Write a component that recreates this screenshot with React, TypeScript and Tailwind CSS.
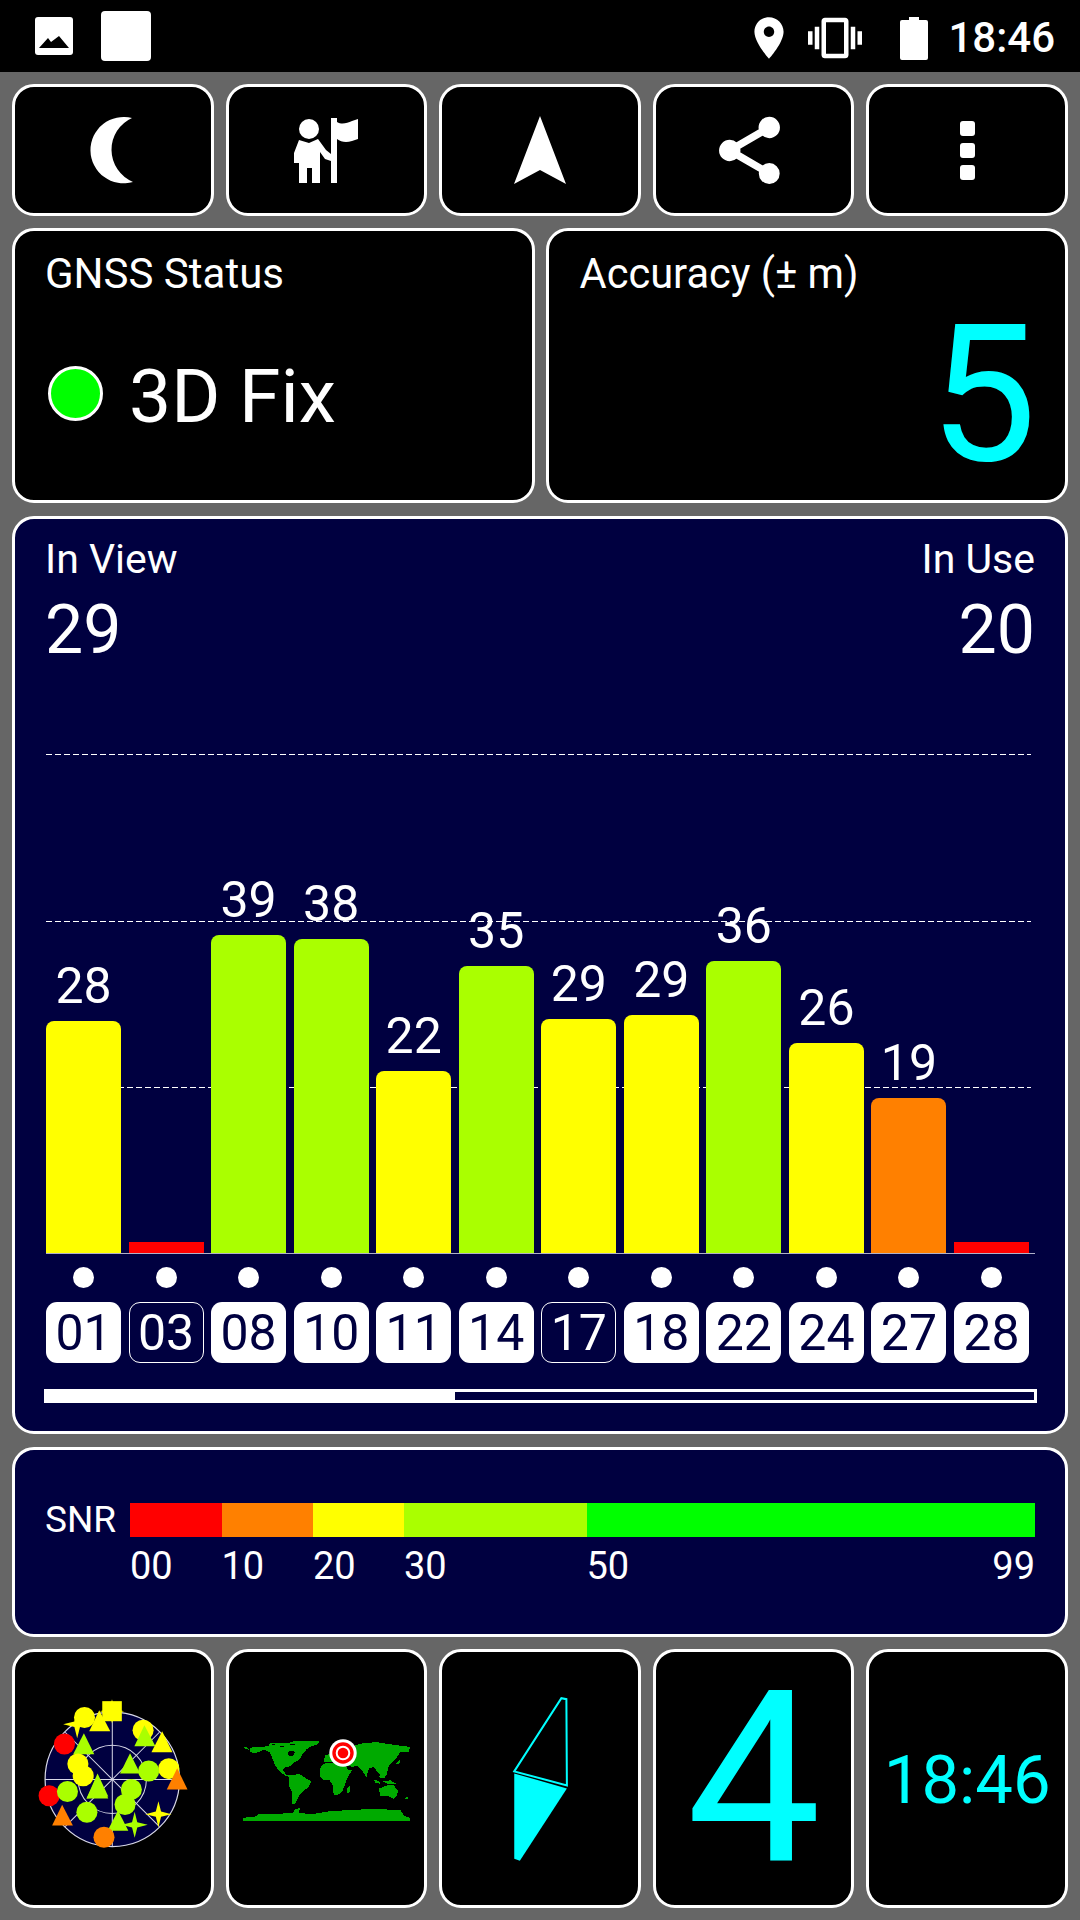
import React from "react";

const Y = "#ffff00", G = "#aaff00", O = "#ff8000", R = "#ff0000";

const sats = [
  { n: "01", v: 28, top: 1021, c: Y, used: true },
  { n: "03", v: null, top: 1242, c: R, used: false },
  { n: "08", v: 39, top: 935, c: G, used: true },
  { n: "10", v: 38, top: 939, c: G, used: true },
  { n: "11", v: 22, top: 1071, c: Y, used: true },
  { n: "14", v: 35, top: 966, c: G, used: true },
  { n: "17", v: 29, top: 1019, c: Y, used: false },
  { n: "18", v: 29, top: 1015, c: Y, used: true },
  { n: "22", v: 36, top: 961, c: G, used: true },
  { n: "24", v: 26, top: 1043, c: Y, used: true },
  { n: "27", v: 19, top: 1098, c: O, used: true },
  { n: "28", v: null, top: 1242, c: R, used: true },
];

const Moon = () => (
  <svg width="50" height="70" viewBox="86 115 50 70">
    <path fill="#fff" d="M132 118A33.2 33.2 0 1 0 133 182A34.9 34.9 0 0 1 132 118Z" />
  </svg>
);

const Tour = () => (
  <svg width="72" height="74" viewBox="290 112 72 74">
    <circle cx="309" cy="128" r="10" fill="#fff" />
    <path fill="#fff" d="M299 139L309 142L318 138L326 149L331 153V160L325 158L320 151V182H312V167H307V182H299V162H294V152Z" />
    <path fill="#fff" d="M331 117H337V121C342 124 347 122 352 120L358 118V138L352 140C346 142 341 141 337 138V182H331Z" />
  </svg>
);

const Tile = ({ children, className = "" }: { children?: React.ReactNode; className?: string }) => (
  <div className={`rounded-[22px] border-[3px] border-white bg-black flex items-center justify-center ${className}`}>
    {children}
  </div>
);

const Star = ({ x, y, a, c }: { x: number; y: number; a: number; c: string }) => {
  const i = a * 0.2;
  return (
    <polygon
      fill={c}
      points={`${x},${y - a} ${x + i},${y - i} ${x + a},${y} ${x + i},${y + i} ${x},${y + a} ${x - i},${y + i} ${x - a},${y} ${x - i},${y - i}`}
    />
  );
};

const Tri = ({ p, c }: { p: string; c: string }) => <polygon points={p} fill={c} />;
const Dot = ({ x, y, c }: { x: number; y: number; c: string }) => <circle cx={x} cy={y} r="10.5" fill={c} />;

const SkyPlot = () => (
  <svg className="w-full h-full" viewBox="16 1652 195 252">
    <circle cx="113" cy="1779" r="67" fill="#000040" stroke="#d8d8e8" strokeWidth="1.2" />
    <circle cx="113" cy="1779" r="34" fill="none" stroke="#d8d8e8" strokeWidth="1" />
    <g stroke="#d8d8e8" strokeWidth="1">
      <line x1="46" y1="1779" x2="180" y2="1779" />
      <line x1="113" y1="1712" x2="113" y2="1846" />
      <line x1="66" y1="1732" x2="160" y2="1826" />
      <line x1="66" y1="1826" x2="160" y2="1732" />
    </g>
    <Star x={78} y={1724} a={14} c={Y} />
    <Dot x={85.3} y={1717.3} c={Y} />
    <Tri p="100,1710 90,1731 111,1731" c={Y} />
    <Star x={112.7} y={1711} a={12} c={Y} />
    <rect x="103" y="1701" width="19.5" height="20" fill={Y} />
    <Dot x={143.7} y={1730} c={Y} />
    <Tri p="145,1725 135,1746 156,1746" c={G} />
    <Tri p="162.7,1731 152,1752 173,1752" c={Y} />
    <Dot x={65.3} y={1743.7} c={R} />
    <Tri p="84.7,1733 74,1754 95,1754" c={G} />
    <Dot x={78.7} y={1763.7} c={Y} />
    <Dot x={84} y={1775.3} c={Y} />
    <Tri p="130.7,1753 120.7,1773 140.7,1773" c={G} />
    <Dot x={169.3} y={1768.3} c={Y} />
    <Dot x={149.3} y={1770.7} c={G} />
    <Tri p="177.7,1768 167.3,1789 188,1789" c={O} />
    <Dot x={50} y={1795.3} c={R} />
    <Dot x={68.3} y={1791} c={G} />
    <Tri p="98.3,1773 87.3,1798 109,1796" c={G} />
    <Tri p="98.3,1775 87.3,1798 109,1798" c={G} />
    <Dot x={132} y={1789} c={G} />
    <Dot x={125.7} y={1804} c={G} />
    <Dot x={87.7} y={1811.7} c={G} />
    <Tri p="63,1804.3 53,1825 73.7,1825" c={O} />
    <Star x={159} y={1813.7} a={13} c={Y} />
    <Star x={135.3} y={1824.3} a={13} c={G} />
    <Tri p="118.7,1810 108.3,1830.3 129,1830.3" c={G} />
    <Dot x={104.7} y={1836.7} c={O} />
  </svg>
);

const land = [
  "40,80 52,82 56,88 46,86",
  "60,82 115,78 120,68 175,68 195,62 268,62 262,72 240,80 228,88 218,100 212,112 205,120 190,128 178,138 165,140 158,150 170,165 190,165 205,172 182,172 165,165 150,155 135,135 125,110 118,95 100,88 75,100 60,95",
  "178,170 205,160 225,172 243,183 235,200 222,210 208,222 195,250 186,250 185,215 175,195",
  "268,145 280,130 330,125 345,135 355,150 365,150 352,170 345,190 335,215 318,225 310,222 308,195 298,180 280,178 270,168",
  "280,125 285,105 300,100 340,85 400,68 440,66 480,72 538,80 535,95 510,95 500,110 480,130 472,145 470,160 460,175 445,160 430,140 415,145 408,170 395,150 380,135 365,140 330,125",
  "40,292 75,288 85,282 150,280 200,275 240,282 300,272 370,268 440,265 510,270 520,285 538,292 538,300 40,300",
  "445,205 470,195 490,195 502,210 500,225 490,235 470,225 450,228",
  "350,205 360,195 358,215 350,220",
  "430,178 445,182 450,190 436,188",
  "455,182 480,180 497,190 470,190",
  "445,170 458,175 462,165 452,160",
  "495,130 510,118 506,132",
  "518,238 532,228 532,234",
  "190,268 210,262 205,275 192,276",
];

const WorldMap = () => (
  <svg className="w-full h-full" viewBox="229 1652 195 252">
    <svg x="230" y="1720" width="200" height="120" viewBox="0 0 600 360" shapeRendering="crispEdges">
      {land.map((p, i) => (
        <polygon key={i} points={p} fill="#00aa00" />
      ))}
      <polygon points="172,96 186,90 194,96 188,106 176,106" fill="#000" />
      <rect x="125" y="72" width="9" height="3" fill="#000" />
      <rect x="150" y="76" width="12" height="3" fill="#000" />
      <rect x="180" y="72" width="15" height="3" fill="#000" />
    </svg>
  </svg>
);

const Marker = () => (
  <svg className="absolute left-[99px] top-[86px]" width="30" height="30" viewBox="-15 -15 30 30">
    <circle r="13.7" fill="#fff" />
    <circle r="10.7" fill={R} />
    <circle r="6.3" fill={R} stroke="#fff" strokeWidth="2" />
  </svg>
);

const Compass = () => (
  <svg className="w-full h-full" viewBox="442 1652 195 252">
    <polygon points="514,1771 561,1698 566,1699 566.5,1785" fill="none" stroke="#00ffff" strokeWidth="2" />
    <polygon points="514,1773 566.5,1788 519.6,1860 514,1858" fill="#00ffff" />
  </svg>
);

export default function App() {
  return (
    <div className="w-[1080px] h-[1920px] bg-[#666666] font-[family-name:Roboto,sans-serif] text-white overflow-hidden">
      {/* status bar */}
      <div className="h-[72px] bg-black flex items-center relative">
        <svg className="ml-[35px]" width="38" height="38" viewBox="0 0 38 38">
          <rect width="38" height="38" rx="3" fill="#fff" />
          <polygon fill="#000" points="4,31 13,21 16,25 24,19 34,31" />
        </svg>
        <div className="ml-[28px] w-[50px] h-[50px] rounded-[4px] bg-white" />
        <div className="ml-auto mt-[4px] flex items-center">
          <svg width="50" height="50" viewBox="0 0 24 24" fill="#fff">
            <path d="M12 2C8.13 2 5 5.13 5 9c0 5.25 7 13 7 13s7-7.75 7-13c0-3.87-3.13-7-7-7zm0 9.5c-1.38 0-2.5-1.12-2.5-2.5s1.12-2.5 2.5-2.5 2.5 1.12 2.5 2.5-1.12 2.5-2.5 2.5z" />
          </svg>
          <svg className="ml-[14px]" width="54" height="54" viewBox="0 0 24 24" fill="#fff">
            <path d="M0 15h2V9H0v6zm3 2h2V7H3v10zm19-8v6h2V9h-2zm-3 8h2V7h-2v10zM16.5 3h-9C6.67 3 6 3.67 6 4.5v15c0 .83.67 1.5 1.5 1.5h9c.83 0 1.5-.67 1.5-1.5v-15c0-.83-.67-1.5-1.5-1.5zM16 19H8V5h8v14z" />
          </svg>
          <svg className="ml-[38px]" width="28" height="43" viewBox="0 0 28 43" fill="#fff">
            <path d="M9 0H19V3H26Q28 3 28 5V41Q28 43 26 43H2Q0 43 0 41V5Q0 3 2 3H9Z" />
          </svg>
          <span className="ml-[20px] mr-[25px] text-[42px] leading-none font-medium">18:46</span>
        </div>
      </div>

      <div className="pl-[12px] pr-[12px] pt-[12px] flex flex-col">
        {/* buttons */}
        <div className="grid grid-cols-5 gap-[12px] h-[132px]">
          <Tile className="pr-[3px]"><Moon /></Tile>
          <Tile><Tour /></Tile>
          <Tile>
            <svg width="52" height="68" viewBox="0 0 52 68"><polygon fill="#fff" points="26,0 52,68 26,54 0,68" /></svg>
          </Tile>
          <Tile className="pr-[8px]">
            <svg width="79" height="79" viewBox="0 0 24 24" fill="#fff" stroke="#fff" strokeWidth="0.5">
              <path d="M18 16.08c-.76 0-1.44.3-1.96.77L8.91 12.7c.05-.23.09-.46.09-.7s-.04-.47-.09-.7l7.05-4.11c.54.5 1.25.81 2.04.81 1.66 0 3-1.34 3-3s-1.34-3-3-3-3 1.34-3 3c0 .24.04.47.09.7L8.04 9.81C7.5 9.31 6.79 9 6 9c-1.66 0-3 1.34-3 3s1.34 3 3 3c.79 0 1.5-.31 2.04-.81l7.12 4.16c-.05.21-.08.43-.08.65 0 1.61 1.31 2.92 2.92 2.92 1.61 0 2.92-1.31 2.92-2.92s-1.31-2.92-2.92-2.92z" />
            </svg>
          </Tile>
          <Tile className="flex-col gap-[7px]">
            <div className="w-[15px] h-[15px] rounded-[3px] bg-white" />
            <div className="w-[15px] h-[15px] rounded-[3px] bg-white" />
            <div className="w-[15px] h-[15px] rounded-[3px] bg-white" />
          </Tile>
        </div>

        {/* status cards */}
        <div className="grid grid-cols-2 gap-[11px] h-[275px] mt-[12px]">
          <div className="rounded-[22px] border-[3px] border-white bg-black pl-[30px] pt-[22px]">
            <div className="text-[42px] leading-none">GNSS Status</div>
            <div className="flex items-center mt-[64px]">
              <div className="ml-[3px] mb-[6px] w-[55px] h-[55px] rounded-full bg-[#00ff00] border-[3px] border-white" />
              <span className="ml-[26px] text-[75px] leading-none">3D Fix</span>
            </div>
          </div>
          <div className="rounded-[22px] border-[3px] border-white bg-black pl-[31px] pr-[28px] pt-[22px] flex flex-col">
            <div className="text-[41.6px] leading-none whitespace-nowrap">Accuracy (± m)</div>
            <div className="text-[192px] leading-none text-[#00ffff] text-right mt-[4px]">5</div>
          </div>
        </div>

        {/* chart panel */}
        <div className="h-[918px] mt-[13px] rounded-[22px] border-[3px] border-white bg-[#000040] pl-[31px] pr-[30px] pt-[20px]">
          <div className="flex justify-between">
            <div className="ml-[-1px]">
              <div className="text-[41px] leading-none">In View</div>
              <div className="text-[68px] leading-none mt-[16px]">29</div>
            </div>
            <div className="text-right">
              <div className="text-[41px] leading-none">In Use</div>
              <div className="text-[68px] leading-none mt-[16px]">20</div>
            </div>
          </div>

          <div className="relative h-[500px] mt-[90px] border-b border-[#b0b0c8]">
            <div className="absolute left-0 w-[985px] top-0 h-px bg-[repeating-linear-gradient(90deg,#ffffff_0_6px,transparent_6px_9px)]" />
            <div className="absolute left-0 w-[985px] top-[167px] h-px bg-[repeating-linear-gradient(90deg,#ffffff_0_6px,transparent_6px_9px)]" />
            <div className="absolute left-0 w-[985px] top-[333px] h-px bg-[repeating-linear-gradient(90deg,#ffffff_0_6px,transparent_6px_9px)]" />
            <div className="relative w-[983px] h-full grid grid-cols-12 gap-x-[7.5px]">
              {sats.map((s) => (
                <div key={s.n} className="flex flex-col justify-end items-center">
                  {s.v !== null && <div className="text-[50px] leading-none mb-[10px]">{s.v}</div>}
                  <div
                    className={s.v !== null ? "w-full rounded-t-[8px]" : "w-full"}
                    style={{ height: 1253 - s.top, background: s.c }}
                  />
                </div>
              ))}
            </div>
          </div>

          <div className="w-[983px] grid grid-cols-12 gap-x-[7.5px] mt-[13px]">
            {sats.map((s) => (
              <div key={s.n} className="flex justify-center">
                <div className="w-[21px] h-[21px] rounded-full bg-white" />
              </div>
            ))}
          </div>

          <div className="w-[983px] grid grid-cols-12 gap-x-[7.5px] mt-[14px]">
            {sats.map((s) => (
              <div
                key={s.n}
                className={
                  s.used
                    ? "h-[61px] rounded-[11px] bg-white text-[#000040] text-[50px] leading-[62px] text-center"
                    : "h-[61px] rounded-[11px] border border-white text-white text-[50px] leading-[60px] text-center"
                }
              >
                {s.n}
              </div>
            ))}
          </div>

          <div className="w-[993px] h-[14px] ml-[-2px] mt-[26px] border-[3px] border-white">
            <div className="w-[408px] h-full bg-white" />
          </div>
        </div>

        {/* SNR */}
        <div className="h-[190px] mt-[13px] rounded-[22px] border-[3px] border-white bg-[#000040] pl-[30px] pr-[30px] pt-[53px] flex">
          <div className="text-[37px] leading-[34px] w-[85px] shrink-0">SNR</div>
          <div className="flex flex-1 text-[38px] leading-none">
            <div className="w-[91.5px]">
              <div className="h-[34px] bg-[#ff0000]" />
              <div className="mt-[10px]">00</div>
            </div>
            <div className="w-[91.5px]">
              <div className="h-[34px] bg-[#ff8000]" />
              <div className="mt-[10px]">10</div>
            </div>
            <div className="w-[91px]">
              <div className="h-[34px] bg-[#ffff00]" />
              <div className="mt-[10px]">20</div>
            </div>
            <div className="w-[182.5px]">
              <div className="h-[34px] bg-[#aaff00]" />
              <div className="mt-[10px]">30</div>
            </div>
            <div className="flex-1">
              <div className="h-[34px] bg-[#00ff00]" />
              <div className="mt-[10px] flex justify-between">
                <span>50</span>
                <span>99</span>
              </div>
            </div>
          </div>
        </div>

        {/* bottom row */}
        <div className="grid grid-cols-5 gap-[12px] h-[258px] mt-[12px]">
          <Tile><SkyPlot /></Tile>
          <Tile className="relative"><WorldMap /><Marker /></Tile>
          <Tile><Compass /></Tile>
          <Tile className="text-[#00ffff] text-[240px] leading-none pt-[2px]">4</Tile>
          <Tile className="text-[#00ffff] text-[67px] leading-none pt-[4px]">18:46</Tile>
        </div>
      </div>
    </div>
  );
}
